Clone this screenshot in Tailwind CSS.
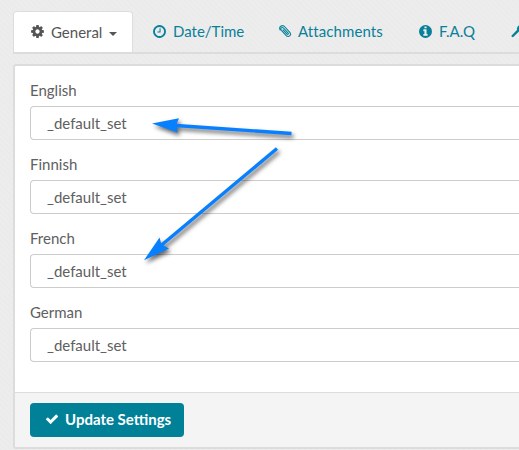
<!DOCTYPE html>
<html lang="en">
<head>
<meta charset="utf-8">
<title>Settings</title>
<script src="https://cdn.jsdelivr.net/npm/@tailwindcss/browser@4"></script>
</head>
<body class="relative h-[450px] w-[519px] overflow-hidden bg-[#ebebeb] bg-[repeating-linear-gradient(45deg,#eaeaea_0px,#ededed_2px,#ebebeb_4px)] font-[Lato,sans-serif] text-[15px] leading-5 text-[#606060]">
<div class="ml-[13px] w-[506px] pt-[11px]">
  <nav class="flex h-[43px] overflow-hidden border-b-2 border-[#dcdcdc] text-[#08809a]">
    <a class="flex h-[41px] w-[120px] shrink-0 items-center rounded-t border border-b-0 border-[#ddd] bg-white pb-px pl-[16px] text-[#555]">
      <svg class="size-[15px]" viewBox="0 0 1792 1792" fill="currentColor"><path d="M1152 896q0-106-75-181t-181-75-181 75-75 181 75 181 181 75 181-75 75-181zm512-109v222q0 12-8 23t-20 13l-185 28q-19 54-39 91 35 50 107 138 10 12 10 25t-9 23q-27 37-99 108t-94 71q-12 0-26-9l-138-108q-44 23-91 38-16 136-29 186-7 28-36 28h-222q-14 0-24.5-8.500t-11.500-21.500l-28-184q-49-16-90-37l-141 107q-10 9-25 9-14 0-25-11-126-114-165-168-7-10-7-23 0-12 8-23 15-21 51-66.500t54-70.500q-27-50-41-99l-183-27q-13-2-21-12.500t-8-23.500v-222q0-12 8-23t19-13l186-28q14-46 39-92-40-57-107-138-10-12-10-24 0-10 9-23 26-36 98.500-107.500t94.500-71.500q13 0 26 10l138 107q44-23 91-38 16-136 29-186 7-28 36-28h222q14 0 24.500 8.500t11.500 21.500l28 184q49 16 90 37l142-107q9-9 24-9 13 0 25 10 129 119 165 170 7 8 7 22 0 12-8 23-15 21-51 66.500t-54 70.500q26 50 41 98l183 28q13 2 21 12.500t8 23.500z"/></svg>
      <span class="ml-[6px] w-[58px]">General</span>
      <svg class="mt-[4px] h-[4px] w-[8px]" viewBox="0 0 8 4" fill="currentColor"><path d="M0 0h8L4 4z"/></svg>
    </a>
    <a class="flex h-[40px] w-[126px] shrink-0 items-center pl-[19px]">
      <svg class="size-[15px]" viewBox="0 0 1792 1792" fill="currentColor"><path d="M1024 544v448q0 14-9 23t-23 9h-320q-14 0-23-9t-9-23v-64q0-14 9-23t23-9h224v-352q0-14 9-23t23-9h64q14 0 23 9t9 23zm416 352q0-148-73-273t-198-198-273-73-273 73-198 198-73 273 73 273 198 198 273 73 273-73 198-198 73-273zm224 0q0 209-103 385.500t-279.500 279.500-385.500 103-385.500-103-279.500-279.500-103-385.500 103-385.500 279.500-279.500 385.500-103 385.500 103 279.500 279.500 103 385.500z"/></svg>
      <span class="ml-[6px]">Date/Time</span>
    </a>
    <a class="flex h-[40px] w-[140px] shrink-0 items-center pl-[20px]">
      <svg class="h-[14px] w-[13px]" viewBox="0 0 13 14" fill="none" stroke="currentColor" stroke-width="1.100" stroke-linecap="round"><path d="M4 5.800L7.800 9.900C8.800 10.900 9.900 9.700 9 8.800L4.800 4.300C2.900 2.400 .8 4.500 2.400 6.400L7 11.300C9.500 14 13 11 10.800 8.300L6 3C3.200-.1-.8 3.300 1.200 5.900"/></svg>
      <span class="ml-[6px] tracking-[0.1px]">Attachments</span>
    </a>
    <a class="flex h-[40px] w-[92px] shrink-0 items-center pl-[19px]">
      <svg class="size-[15px]" viewBox="0 0 1792 1792" fill="currentColor"><path d="M1152 1376v-160q0-14-9-23t-23-9h-96v-512q0-14-9-23t-23-9h-320q-14 0-23 9t-9 23v160q0 14 9 23t23 9h96v320h-96q-14 0-23 9t-9 23v160q0 14 9 23t23 9h448q14 0 23-9t9-23zm-128-896v-160q0-14-9-23t-23-9h-192q-14 0-23 9t-9 23v160q0 14 9 23t23 9h192q14 0 23-9t9-23zm640 416q0 209-103 385.500t-279.500 279.500-385.500 103-385.500-103-279.500-279.500-103-385.500 103-385.500 279.500-279.500 385.500-103 385.500 103 279.500 279.500 103 385.500z"/></svg>
      <span class="ml-[6px]">F.A.Q</span>
    </a>
    <a class="flex h-[40px] w-[28px] shrink-0 items-center overflow-hidden pl-[20px]">
      <svg class="h-[14px] w-[8px] shrink-0" viewBox="0 0 8 14" fill="none" stroke="currentColor"><path d="M1.700 12L8 5.700" stroke-width="2.400" stroke-linecap="round"/><path d="M8.500 2a4 4 0 0 0-1 5" stroke-width="2"/></svg>
    </a>
  </nav>
  <main class="mt-[10px] h-[385px] rounded-l-[3px] border-2 border-r-0 border-[#dcdcdc] bg-white">
    <div class="flex h-[326px] flex-col gap-[14px] pt-[14px] pl-[15px]">
      <div><label class="block h-[26px]">English</label><div class="h-[34px] rounded-l border border-r-0 border-[#ccc] pl-[16px] leading-8">_default_set</div></div>
      <div><label class="block h-[26px]">Finnish</label><div class="h-[34px] rounded-l border border-r-0 border-[#ccc] pl-[16px] leading-8">_default_set</div></div>
      <div><label class="block h-[26px]">French</label><div class="h-[34px] rounded-l border border-r-0 border-[#ccc] pl-[16px] leading-8">_default_set</div></div>
      <div><label class="block h-[26px]">German</label><div class="h-[34px] rounded-l border border-r-0 border-[#ccc] pl-[16px] leading-8">_default_set</div></div>
    </div>
    <footer class="h-[55px] border-t border-[#ddd] bg-[#f4f4f4] pt-[10px] pl-[15px]">
      <button class="flex h-[34px] w-[154px] items-center rounded bg-[#008198] pb-[2px] pl-[15px] font-bold text-white">
        <svg class="size-[14px]" viewBox="0 0 1792 1792" fill="currentColor"><path d="M1671 566q0 40-28 68l-724 724-136 136q-28 28-68 28t-68-28l-136-136-362-362q-28-28-28-68t28-68l136-136q28-28 68-28t68 28l294 295 656-657q28-28 68-28t68 28l136 136q28 28 28 68z"/></svg>
        <span class="ml-[6px] whitespace-nowrap">Update Settings</span>
      </button>
    </footer>
  </main>
</div>
<svg class="pointer-events-none absolute top-0 left-0 h-[450px] w-[519px] drop-shadow-[2px_3px_2px_rgba(0,0,0,0.6)]" viewBox="0 0 519 450" fill="#087fff" stroke="#087fff">
  <path d="M176 125.500L291.500 133.500M161 245.500L277 148.500" stroke-width="3.400" fill="none"/>
  <path d="M152 123.500L179 118.300L176 125.500L178 132.800ZM144 260.300L159.500 237.500L161.500 244.500L169 248.500Z" stroke="none"/>
</svg>
</body>
</html>
